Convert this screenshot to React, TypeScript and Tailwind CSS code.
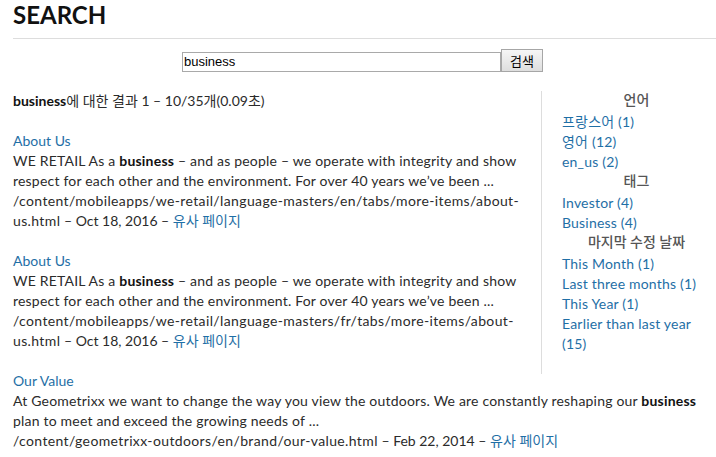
const results = [
  {
    title: 'About Us',
    before: 'WE RETAIL As a ',
    after:
      ' – and as people – we operate with integrity and show respect for each other and the environment. For over 40 years we’ve been ...',
    path: '/content/mobileapps/we-retail/language-masters/en/tabs/more-items/about-us.html',
    date: 'Oct 18, 2016',
  },
  {
    title: 'About Us',
    before: 'WE RETAIL As a ',
    after:
      ' – and as people – we operate with integrity and show respect for each other and the environment. For over 40 years we’ve been ...',
    path: '/content/mobileapps/we-retail/language-masters/fr/tabs/more-items/about-us.html',
    date: 'Oct 18, 2016',
  },
  {
    title: 'Our Value',
    before:
      'At Geometrixx we want to change the way you view the outdoors. We are constantly reshaping our ',
    after: ' plan to meet and exceed the growing needs of ...',
    path: '/content/geometrixx-outdoors/en/brand/our-value.html',
    date: 'Feb 22, 2014',
  },
];

const facets = [
  { heading: '언어', items: ['프랑스어 (1)', '영어 (12)', 'en_us (2)'] },
  { heading: '태그', items: ['Investor (4)', 'Business (4)'] },
  {
    heading: '마지막 수정 날짜',
    items: ['This Month (1)', 'Last three months (1)', 'This Year (1)', 'Earlier than last year (15)'],
  },
];

export default function App() {
  return (
    <div className="min-h-screen bg-white pl-[13px] font-['Lato','Noto_Sans_CJK_KR',sans-serif] text-[14px] leading-[20px] text-[#2b2b2b]">
      <h1 className="border-b border-[#dddddd] pt-[1px] pb-[9px] text-[24px] font-bold leading-[28px] text-[#111]">
        SEARCH
      </h1>

      <form className="mt-[10px] flex items-start justify-center pr-[4px]">
        <input
          type="text"
          defaultValue="business"
          className="mt-[3px] h-[20px] w-[319px] border border-[#a9a9a9] px-[1px] font-['Liberation_Sans',sans-serif] text-[13px] text-black outline-none"
        />
        <button
          type="button"
          className="h-[23px] w-[42px] border border-[#a6a6a6] bg-gradient-to-b from-[#f6f6f6] to-[#dedede] font-['Noto_Sans_CJK_KR',sans-serif] text-[13px] leading-[20px] text-black"
        >
          검색
        </button>
      </form>

      <div className="mt-[19px]">
        <div className="float-right w-[175px] border-l border-[#dddddd] pr-[5px] pb-5 pl-5">
          {facets.map((f) => (
            <div key={f.heading}>
              <div className="mb-[3px] text-center text-[14px] leading-[18px] font-medium text-[#555]">
                {f.heading}
              </div>
              {f.items.map((item) => (
                <div key={item} className="tracking-[0.2px] text-[#1f6fa6]">
                  {item}
                </div>
              ))}
            </div>
          ))}
        </div>

        <div>
          <b className="text-[#111]">business</b>에 대한 결과 1 – 10/35개(0.09초)
        </div>

        {results.map((r, i) => (
          <div key={i} className="mt-[20px]">
            <div className="text-[#1f6fa6]">{r.title}</div>
            <div className="tracking-[0.2px]">
              {r.before}
              <b className="text-[#111]">business</b>
              {r.after}
            </div>
            <div>
              <span className="tracking-[0.37px]">{r.path}</span> – {r.date} –{' '}
              <span className="text-[#1f6fa6]">유사 페이지</span>
            </div>
          </div>
        ))}
      </div>
    </div>
  );
}
